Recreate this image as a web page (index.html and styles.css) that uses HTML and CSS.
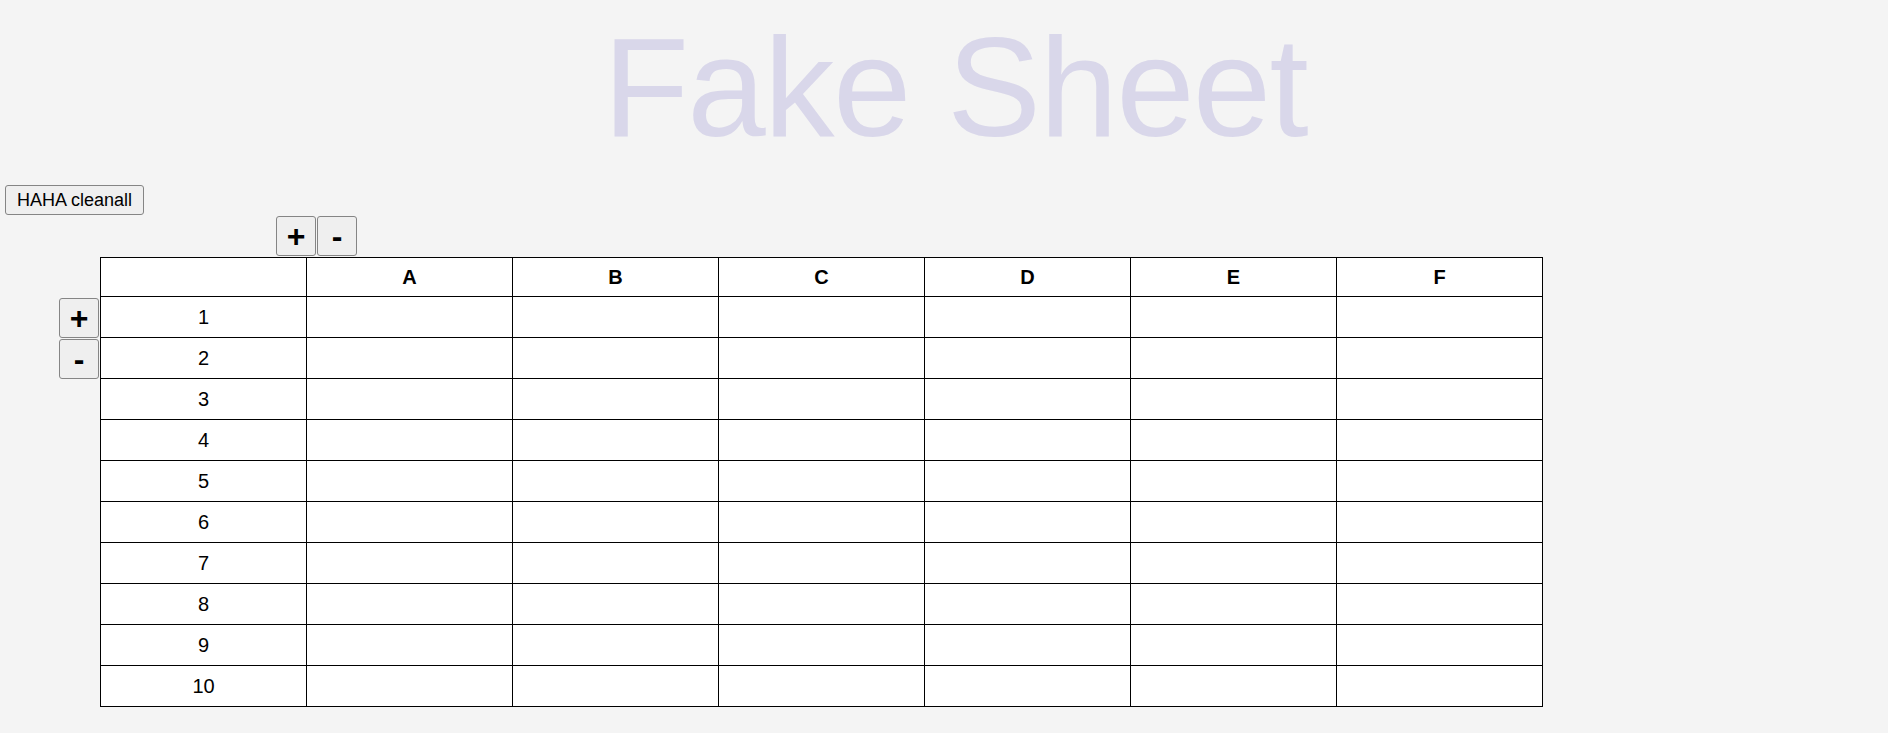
FILE: index.html
```html
<!DOCTYPE html>
<html lang="en">
<head>
<meta charset="utf-8">
<title>Fake Sheet</title>
<link rel="stylesheet" href="styles.css">
</head>
<body>
<h1 class="title">Fake Sheet</h1>
<div class="toolbar">
  <button class="btn clean-btn" type="button">HAHA cleanall</button>
</div>
<div class="sheet">
  <div class="corner"></div>
  <div class="col-controls">
    <button class="btn ctrl-btn" type="button">+</button><button class="btn ctrl-btn" type="button">-</button>
  </div>
  <div class="row-controls">
    <button class="btn ctrl-btn" type="button">+</button>
    <button class="btn ctrl-btn" type="button">-</button>
  </div>
  <table class="grid">
    <thead>
      <tr><th></th><th>A</th><th>B</th><th>C</th><th>D</th><th>E</th><th>F</th></tr>
    </thead>
    <tbody>
      <tr><td>1</td><td></td><td></td><td></td><td></td><td></td><td></td></tr>
      <tr><td>2</td><td></td><td></td><td></td><td></td><td></td><td></td></tr>
      <tr><td>3</td><td></td><td></td><td></td><td></td><td></td><td></td></tr>
      <tr><td>4</td><td></td><td></td><td></td><td></td><td></td><td></td></tr>
      <tr><td>5</td><td></td><td></td><td></td><td></td><td></td><td></td></tr>
      <tr><td>6</td><td></td><td></td><td></td><td></td><td></td><td></td></tr>
      <tr><td>7</td><td></td><td></td><td></td><td></td><td></td><td></td></tr>
      <tr><td>8</td><td></td><td></td><td></td><td></td><td></td><td></td></tr>
      <tr><td>9</td><td></td><td></td><td></td><td></td><td></td><td></td></tr>
      <tr><td>10</td><td></td><td></td><td></td><td></td><td></td><td></td></tr>
    </tbody>
  </table>
</div>
</body>
</html>
```

FILE: styles.css
```css
html, body {
  margin: 0;
  padding: 0;
  background: #f4f4f4;
}
body {
  font-family: "Liberation Sans", Arial, sans-serif;
  color: #000;
}
.title {
  margin: 0;
  padding: 18px 0 0 22px;
  font-size: 141px;
  line-height: 138px;
  font-weight: normal;
  letter-spacing: -1.7px;
  text-align: center;
  color: #d9d7ea;
}
.toolbar {
  padding: 29px 0 0 5px;
}
.btn {
  font-family: "Liberation Sans", Arial, sans-serif;
  background: #efefef;
  color: #000;
  border: 1px solid #858585;
  border-radius: 3px;
  margin: 0;
  cursor: pointer;
}
.clean-btn {
  display: block;
  font-size: 18px;
  height: 30px;
  padding: 0 11px;
  line-height: 28px;
}
.sheet {
  display: grid;
  grid-template-columns: 41px auto;
  margin: 1px 0 0 59px;
}
.col-controls {
  display: flex;
  gap: 1px;
  padding-left: 176px;
  padding-bottom: 1px;
}
.row-controls {
  display: flex;
  flex-direction: column;
  gap: 1px;
  padding-top: 41px;
}
.ctrl-btn {
  width: 40px;
  height: 40px;
  padding: 0;
  font-size: 32px;
  font-weight: bold;
  line-height: 38px;
}
.grid {
  border-collapse: collapse;
  table-layout: fixed;
  width: 1443px;
  background: #fff;
  font-size: 20px;
}
.grid th,
.grid td {
  border: 1px solid #000;
  padding: 0;
  text-align: center;
  vertical-align: middle;
}
.grid th {
  height: 38px;
  font-weight: bold;
}
.grid td {
  height: 40px;
}
```
